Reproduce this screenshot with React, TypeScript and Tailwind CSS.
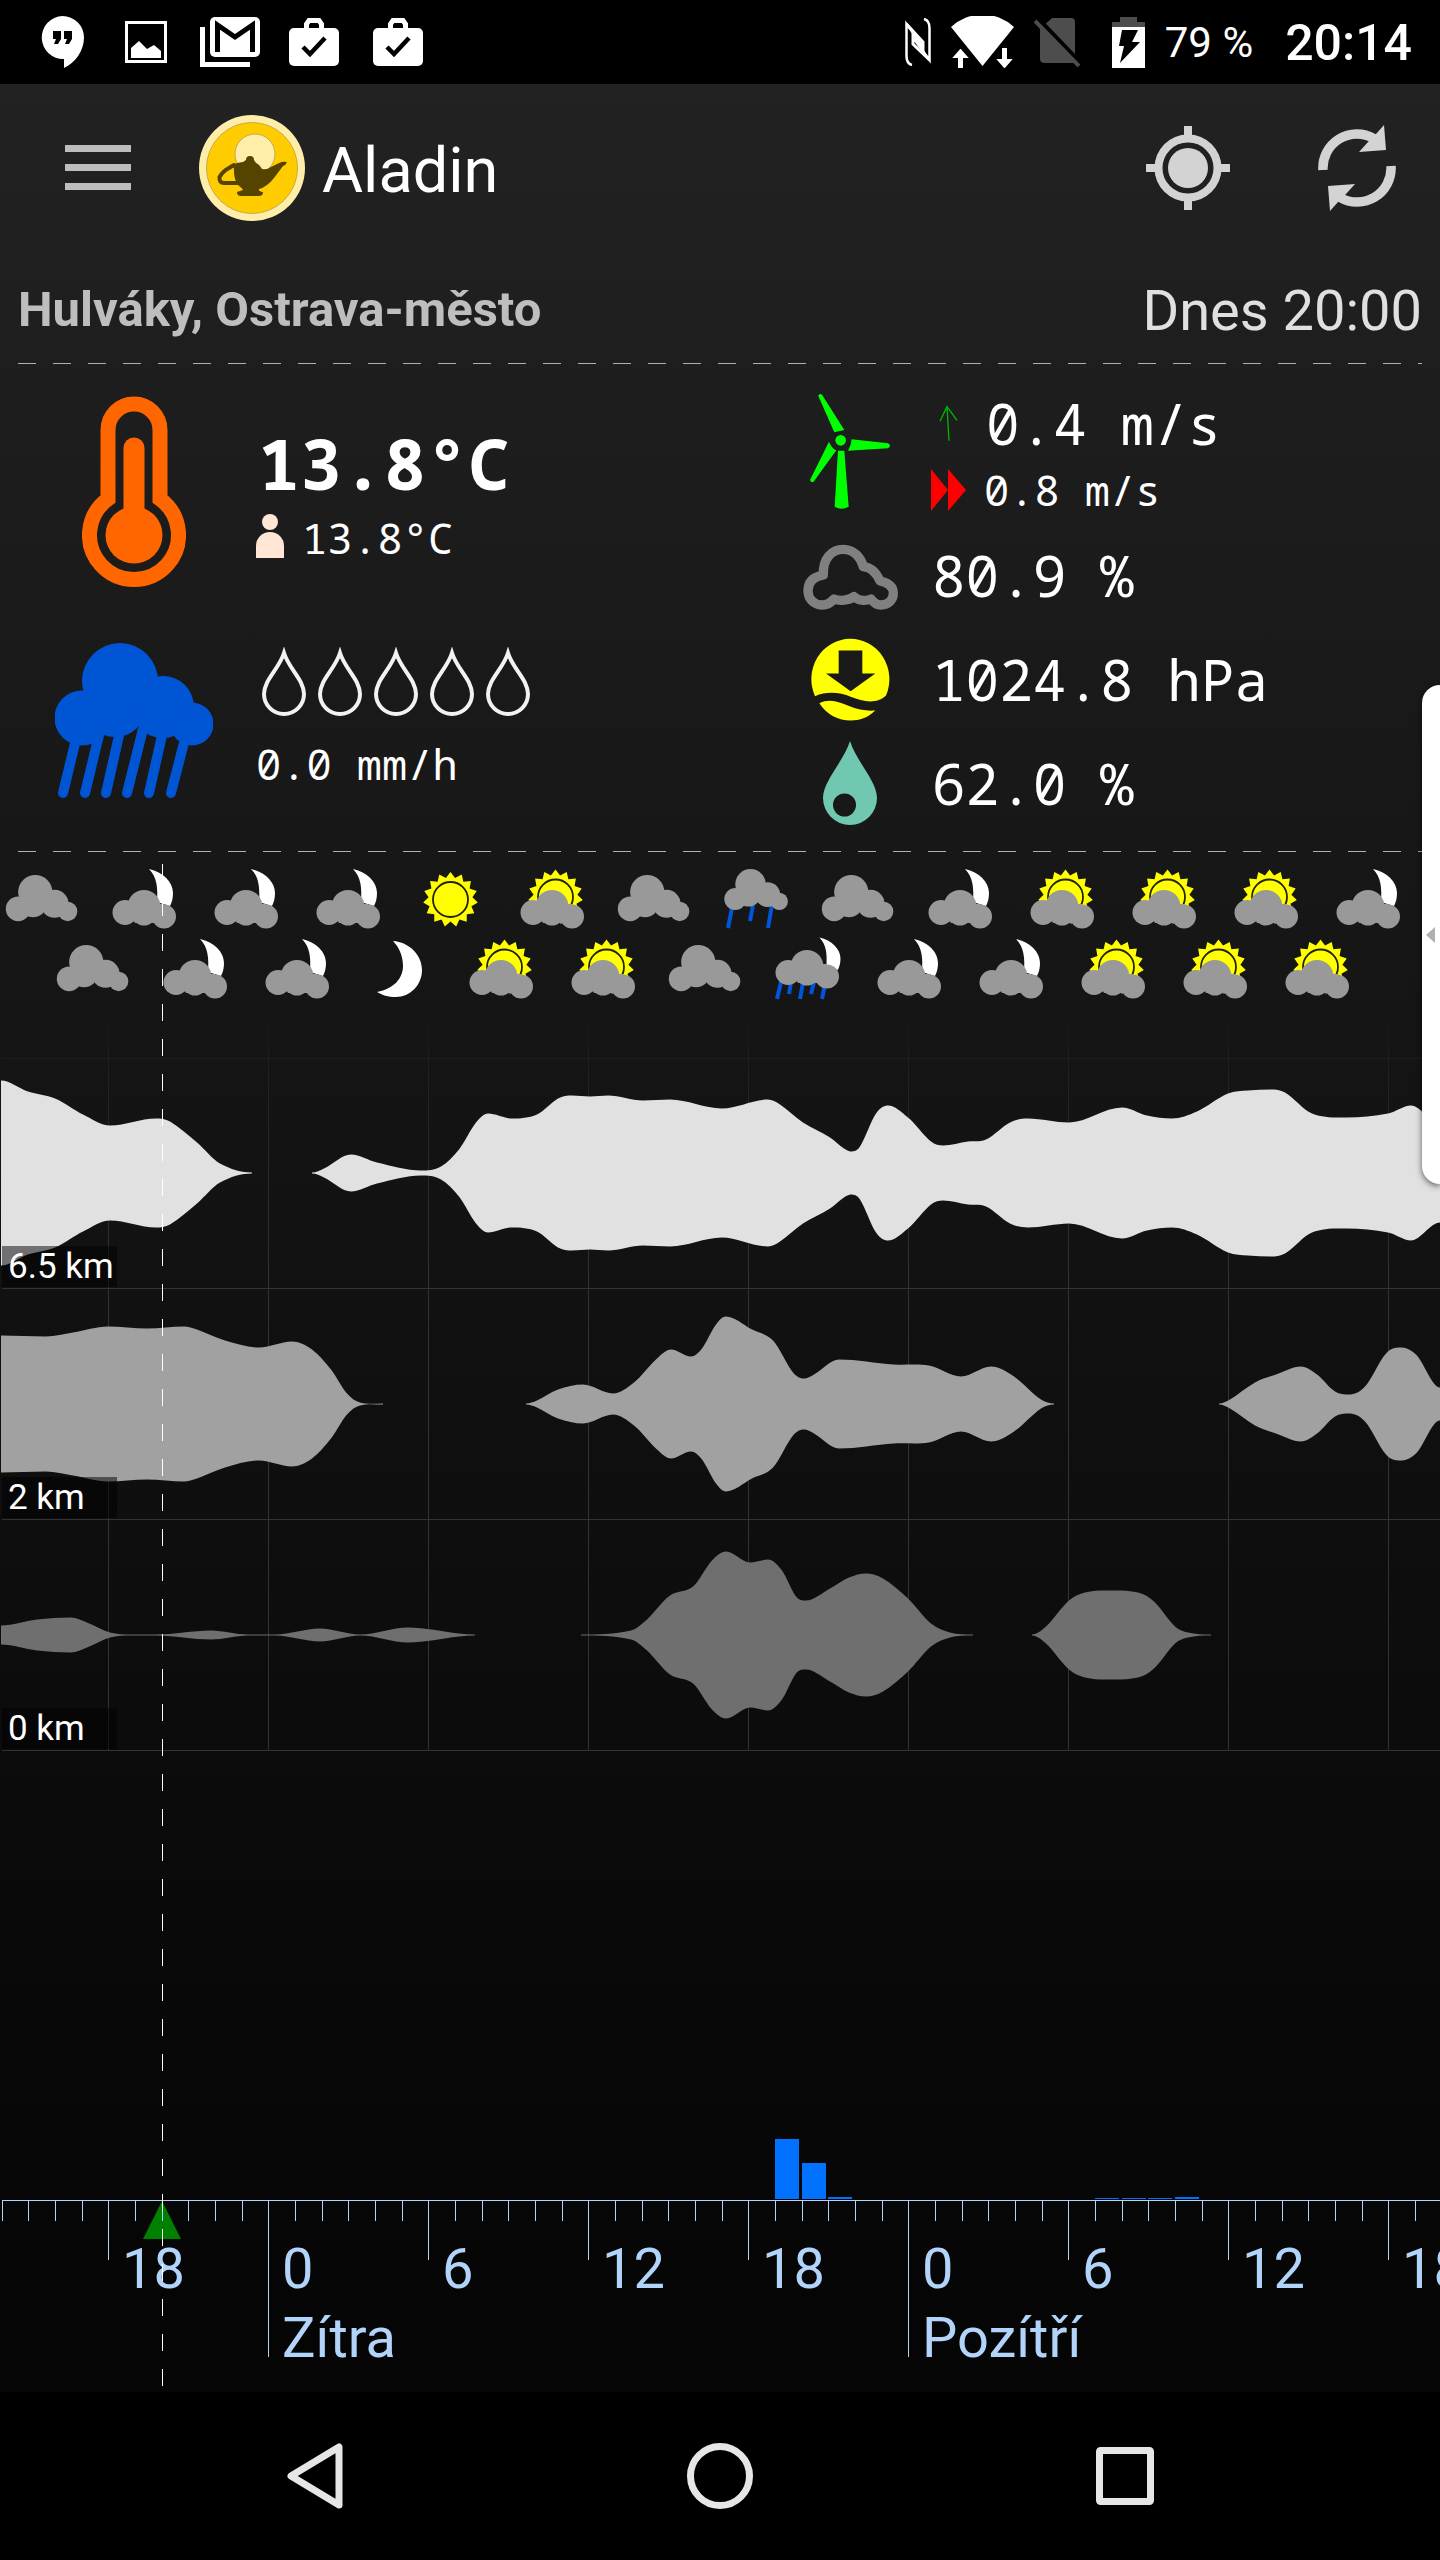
import type { ReactNode } from "react";

type Sky = "cloud" | "cloudMoon" | "cloudSun" | "sun" | "moon" | "rain" | "rainMoon";
type Point = [x: number, half: number];

const SKY_EVEN: Sky[] = [
  "cloud", "cloudMoon", "cloudMoon", "cloudMoon", "sun", "cloudSun", "cloud",
  "rain", "cloud", "cloudMoon", "cloudSun", "cloudSun", "cloudSun", "cloudMoon",
];
const SKY_ODD: Sky[] = [
  "cloud", "cloudMoon", "cloudMoon", "moon", "cloudSun", "cloudSun", "cloud",
  "rainMoon", "cloudMoon", "cloudMoon", "cloudSun", "cloudSun", "cloudSun",
];

// Cloud cover per altitude: half thickness of the band at each x
const LAYERS: { label: string; fill: string; top: number; runs: Point[][] }[] = [
  {
    label: "6.5 km",
    fill: "#e1e1e1",
    top: 54,
    runs: [
      [[1, 92], [28, 81], [55, 74], [83, 58], [110, 47], [156, 54], [170, 51], [197, 30], [220, 9], [252, 0]],
      [
        [312, 0], [324, 4], [351, 18], [377, 10], [421, 2], [441, 6], [459, 23], [476, 50], [488, 59], [512, 54],
        [537, 58], [558, 74], [572, 77], [590, 76], [608, 77], [643, 72], [670, 73], [722, 64], [768, 73], [780, 68],
        [803, 50], [830, 35], [844, 24], [851, 21], [860, 26], [876, 59], [888, 67], [908, 55], [931, 31], [943, 27],
        [968, 31], [986, 33], [1010, 50], [1028, 54], [1069, 50], [1122, 65], [1147, 57], [1172, 54], [1197, 61],
        [1228, 79], [1248, 82], [1271, 83], [1285, 80], [1312, 59], [1347, 55], [1388, 59], [1411, 67], [1440, 49],
      ],
    ],
  },
  {
    label: "2 km",
    fill: "#a1a1a1",
    top: 285,
    runs: [
      [
        [1, 68], [46, 67], [73, 71], [108, 77], [147, 75], [184, 77], [197, 74], [225, 63], [259, 56], [292, 62],
        [312, 54], [331, 34], [347, 10], [360, 1], [383, 0],
      ],
      [
        [526, 0], [537, 3], [558, 14], [583, 19], [613, 10], [634, 21], [657, 45], [671, 54], [691, 47], [702, 55],
        [716, 79], [726, 87], [752, 74], [773, 63], [793, 31], [804, 25], [814, 29], [839, 44], [894, 39], [929, 38],
        [961, 27], [991, 37], [1014, 27], [1041, 4], [1054, 0],
      ],
      [
        [1219, 0], [1230, 4], [1255, 21], [1276, 29], [1301, 37], [1317, 29], [1335, 12], [1349, 9], [1365, 17],
        [1386, 50], [1400, 56], [1416, 49], [1440, 16],
      ],
    ],
  },
  {
    label: "0 km",
    fill: "#6f6f6f",
    top: 516,
    runs: [
      [
        [1, 9], [37, 15], [71, 17], [87, 12], [110, 2], [131, 0], [156, 0], [211, 4], [248, 0], [275, 0], [320, 6],
        [360, 0], [408, 7], [459, 1], [475, 0],
      ],
      [
        [581, 0], [631, 4], [647, 15], [670, 39], [693, 48], [712, 74], [726, 83], [750, 72], [768, 75], [782, 64],
        [796, 38], [806, 34], [830, 46], [849, 57], [866, 61], [883, 56], [908, 36], [931, 11], [950, 2], [973, 0],
      ],
      [
        [1032, 0], [1046, 8], [1069, 34], [1085, 42], [1106, 44], [1138, 42], [1154, 33], [1175, 8], [1188, 2], [1211, 0],
      ],
    ],
  },
];

const RAIN_BARS = [
  { x: 775, h: 60 },
  { x: 802, h: 36 },
  { x: 828, h: 2 },
  { x: 1095, h: 1 },
  { x: 1122, h: 1 },
  { x: 1148, h: 1 },
  { x: 1175, h: 2 },
];

const HOURS = Array.from({ length: 54 }, (_, i) => ({ hour: (14 + i) % 24, x: Math.round(1.7 + (i * 80) / 3) }));
const DAYS = ["Zítra", "Pozítří"];

function curve(points: Point[]) {
  const slope = points.map((p, i) => {
    const a = points[i - 1];
    const b = points[i + 1];
    if (!a || !b || (p[1] - a[1]) * (b[1] - p[1]) <= 0) return 0;
    return (b[1] - a[1]) / (b[0] - a[0]);
  });
  return points
    .slice(1)
    .map((p, i) => {
      const q = points[i];
      const d = (p[0] - q[0]) / 3;
      return `C${q[0] + d} ${q[1] + slope[i] * d} ${p[0] - d} ${p[1] - slope[i + 1] * d} ${p[0]} ${p[1]}`;
    })
    .join("");
}

function bandPath(run: Point[], mid: number) {
  const up = run.map(([x, h]): Point => [x, mid - h - 0.5]);
  const down = run.map(([x, h]): Point => [x, mid + h + 0.5]).reverse();
  return `M${up[0].join(" ")}${curve(up)}L${down[0].join(" ")}${curve(down)}Z`;
}

// 15 points, tip radius 27.5
const SUN_RAYS = Array.from({ length: 30 }, (_, i) => {
  const r = i % 2 ? 22 : 27.5;
  const a = (i * 12 * Math.PI) / 180;
  return `${(r * Math.sin(a)).toFixed(1)},${(-r * Math.cos(a)).toFixed(1)}`;
}).join(" ");

function CloudShape() {
  return (
    <>
      <circle cx="65" cy="38" r="38" />
      <circle cx="108" cy="64" r="31" />
      <circle cx="27" cy="75" r="27.5" />
      <circle cx="137" cy="81" r="21.5" />
      <circle cx="60" cy="63" r="31" />
      <circle cx="104" cy="68" r="25" />
    </>
  );
}

function LowCloud() {
  return (
    <g fill="#999">
      <circle cx="42" cy="42.500" r="16.500" />
      <circle cx="23" cy="48.500" r="12.500" />
      <circle cx="62" cy="52.500" r="12" />
      <path d="M23 40H62V54L52 59H33Z" />
      <circle cx="42" cy="50" r="11.500" />
    </g>
  );
}

function Sun({ x, y }: { x: number; y: number }) {
  return (
    <g transform={`translate(${x} ${y})`}>
      <polygon points={SUN_RAYS} fill="#ff0" />
      <circle r="17.500" fill="#ff0" stroke="#222208" strokeWidth="1.800" />
    </g>
  );
}

const TIP_MOON = "M47 5C61 8 71 18 71 29C71 34 70 38 68 42L55 38C56 24 55 13 47 5Z";

function SkyIcon({ kind }: { kind: Sky }) {
  return (
    <svg viewBox="0 0 84 70" className="h-[70px] w-[84px] shrink-0">
      {kind === "cloud" && <g fill="#999" transform="translate(6 11) scale(.45)"><CloudShape /></g>}
      {kind === "sun" && <Sun x={42.5} y={35.5} />}
      {kind === "moon" && (
        <path fill="#fff" d="M36 7C52 8 65 21 65 36C65 51 53 63 39 63C31 63 25 61 20 58C37 55 46 44 46 32C46 22 42 13 36 7Z" />
      )}
      {kind === "cloudSun" && <><Sun x={45.5} y={33} /><LowCloud /></>}
      {kind === "cloudMoon" && <><path fill="#fff" d={TIP_MOON} /><LowCloud /></>}
      {kind === "rain" && (
        <>
          <path stroke="#0055dd" strokeWidth="4" d="M18 44L14 64M39 41L36 57M58 41L54 64" />
          <g fill="#999" transform="translate(10.500 5) scale(.4)"><CloudShape /></g>
        </>
      )}
      {kind === "rainMoon" && (
        <>
          <path fill="#fff" d={TIP_MOON} transform="translate(13 -1) scale(.88)" />
          <path stroke="#0055dd" strokeWidth="4" d="M16 48L12 65M26 48L24 60M38 48L35 65M49 48L46 60M60 50L57 65" />
          <g transform="translate(0 -10)"><LowCloud /></g>
        </>
      )}
    </svg>
  );
}

function StatusBar() {
  const bag = (
    <svg viewBox="0 0 50 48" className="h-12 w-[50px]">
      <path fill="none" stroke="#fff" strokeWidth="5" d="M17.500 12V6L20 2.500H30L32.500 6V12" />
      <rect y="10" width="50" height="38" rx="5" fill="#fff" />
      <path fill="none" stroke="#000" strokeWidth="4.500" d="M14 29L21 36L36 20" />
    </svg>
  );
  return (
    <div className="flex h-[84px] items-center justify-between bg-black pr-7 pl-5 text-white">
      <div className="flex *:flex *:w-[84px] *:items-center *:justify-center">
        <span>
          <svg viewBox="0 0 43 52" className="h-[52px] w-[43px]" fill="#fff">
            <path d="M21.500 0A21.500 21.500 0 0 1 43 21.500C43 35 34 47 23 52V43A21.500 21.500 0 0 1 21.500 0Z" />
            <path fill="#000" d="M12 15H20V23L17 28H13L15 23H12ZM23 15H31V23L28 28H24L26 23H23Z" />
          </svg>
        </span>
        <span>
          <svg viewBox="0 0 42 42" className="size-[42px]">
            <rect x="1.500" y="1.500" width="39" height="39" fill="none" stroke="#fff" strokeWidth="3" />
            <path fill="#fff" d="M6 37V27L14 20L22 28L29 24L36 30V37Z" />
          </svg>
        </span>
        <span>
          <svg viewBox="0 0 60 50" className="h-[50px] w-[60px]">
            <path fill="none" stroke="#fff" strokeWidth="5" d="M2.500 10V47.500H50" />
            <rect x="10" width="50" height="40" rx="5" fill="#fff" />
            <path fill="none" stroke="#000" strokeWidth="5" d="M17.500 35V8L35 20L52.500 8V35" />
          </svg>
        </span>
        <span>{bag}</span>
        <span>{bag}</span>
      </div>
      <div className="flex items-center">
        <svg viewBox="0 0 26 48" className="mr-5 h-12 w-[26px]" fill="none" stroke="#fff" strokeWidth="2.500">
          <path d="M7 47C3 46 1.500 43 1.500 38V6L17 27M19 1C23 2 24.500 5 24.500 10V42L9 21" />
          <path d="M1.500 6L18 24V30L8 18V26L24.500 42" strokeWidth="3" />
        </svg>
        <svg viewBox="0 0 63 52" className="mr-5 h-[52px] w-[63px]" fill="#fff">
          <path d="M0 11A46 46 0 0 1 63 11L31.500 50Z" />
          <path stroke="#000" strokeWidth="2" d="M9.500 31L-1 43H6V53H13V43H20ZM53.500 54L43 42H50V31H57V42H64Z" />
        </svg>
        <svg viewBox="0 0 46 50" className="mr-8 h-[50px] w-[46px]">
          <path fill="#4d4d4d" d="M18 1H37Q41 1 41 5V46H11Q6 46 6 42V12Z" />
          <path stroke="#000" strokeWidth="5" d="M4 2L47 47" />
          <path stroke="#4d4d4d" strokeWidth="4" d="M1 4L45 49" />
        </svg>
        <svg viewBox="0 0 33 51" className="mr-5 h-[51px] w-[33px]">
          <path fill="#4d4d4d" d="M8 0H25V5H33V12H0V5H8Z" />
          <path fill="#fff" d="M0 10H33V51H0Z" />
          <path fill="#000" d="M10 13H26L20 25H28L8 46L12 29H7Z" />
        </svg>
        <span className="mr-8 pt-0.5 text-[42px] leading-none">79 %</span>
        <span className="pt-0.5 text-[50px] leading-none font-medium">20:14</span>
      </div>
    </div>
  );
}

function AppBar() {
  return (
    <header className="flex h-[168px] items-center pr-11 pl-[65px]">
      <button aria-label="Menu" className="mr-[68px]">
        <svg viewBox="0 0 66 46" className="h-[46px] w-[66px]" fill="#bdbdbd">
          <path d="M0 0H66V7H0ZM0 19H66V26H0ZM0 38H66V45H0Z" />
        </svg>
      </button>
      <svg viewBox="0 0 106 106" className="mr-[17px] size-[106px]">
        <circle cx="53" cy="53" r="53" fill="#fea" />
        <circle cx="53" cy="53" r="45.500" fill="#fc0" stroke="#c8a94e" />
        <circle cx="56" cy="39" r="20" fill="#fea" stroke="#c8a94e" />
        <path
          fill="#540"
          d="M51 41Q55 41 55 45L57 48Q60 49 63 54Q68 55 72 52L80 48Q84 46 88 47Q87 50 84 51L75 63Q68 72 60 74Q59 76 64 77Q64 81 60 81H42Q38 81 38 77L44 75Q43 73 39 70Q35 64 35 57V52Q35 49 38 48L44 47L47 45Q47 41 51 41Z"
        />
        <path fill="none" stroke="#540" strokeWidth="4" strokeLinejoin="round" d="M40 57L35 50L30 53Q24 56 20.500 62Q20 68 25 68H40" />
      </svg>
      <h1 className="flex-1 pt-1 text-[63px] leading-none text-white">Aladin</h1>
      <button aria-label="Poloha" className="mr-[88px]">
        <svg viewBox="0 0 84 84" className="size-[84px]" fill="#d3d3d3">
          <circle cx="42" cy="42" r="20" />
          <circle cx="42" cy="42" r="29.500" fill="none" stroke="#d3d3d3" strokeWidth="8" />
          <path d="M38 0H46V12H38ZM38 72H46V84H38ZM0 38H12V46H0ZM72 38H84V46H72Z" />
        </svg>
      </button>
      <button aria-label="Obnovit">
        <svg viewBox="0 0 78 86" className="h-[86px] w-[78px]">
          {[0, 180].map((turn) => (
            <g key={turn} transform={`rotate(${turn} 39 43)`}>
              <path fill="none" stroke="#d3d3d3" strokeWidth="9.500" d="M5 45A34 34 0 0 1 56 13.500" />
              <path fill="#d3d3d3" d="M66 0L68 25L41 27L50 17L58 9Z" />
            </g>
          ))}
        </svg>
      </button>
    </header>
  );
}

function Divider() {
  return <div className="mx-[18px] h-px bg-[repeating-linear-gradient(90deg,#b0b0b0_0_18px,transparent_18px_35px)]" />;
}

function Reading({ icon, value }: { icon: ReactNode; value: string }) {
  return (
    <div className="flex h-[104px] items-center">
      <div className="w-[212px] shrink-0 pl-20">{icon}</div>
      <span className="text-[56px] leading-none">{value}</span>
    </div>
  );
}

function Conditions() {
  return (
    <section className="grid h-[487px] grid-cols-2 font-['Noto_Sans_Mono','DejaVu_Sans_Mono',monospace] whitespace-pre text-white">
      <div className="flex flex-col gap-[54px] pt-8">
        <div className="flex h-[193px]">
          <div className="flex w-[256px] shrink-0 justify-center pl-3">
            <svg viewBox="0 0 104 192" className="h-48 w-[104px]">
              <path fill="none" stroke="#f60" strokeWidth="15" d="M26 103V34A26 26 0 0 1 78 34V103A44.500 44.500 0 1 1 26 103Z" />
              <circle cx="52" cy="139" r="28.500" fill="#f60" />
              <path stroke="#f60" strokeWidth="21" strokeLinecap="round" d="M52 52V130" />
            </svg>
          </div>
          <div className="pt-8">
            <div className="pl-0.5 text-[70px] leading-[70px] font-bold">13.8°C</div>
            <div className="mt-3 flex gap-[18px]">
              <svg viewBox="0 0 28 44" className="mt-1 h-11 w-7" fill="#ffe6d5">
                <circle cx="14" cy="8" r="8" />
                <path d="M0 44V32A14 14 0 0 1 28 32V44Z" />
              </svg>
              <span className="text-[42px] leading-[56px]">13.8°C</span>
            </div>
          </div>
        </div>
        <div className="flex">
          <div className="flex w-[256px] shrink-0 justify-center pl-3">
            <svg viewBox="0 0 158 156" className="h-[156px] w-[158px]" fill="#0055d4">
              <CloudShape />
              <path
                fill="none"
                stroke="#0055d4"
                strokeWidth="10"
                strokeLinecap="round"
                d="M8 150L22 92M30 150L44 92M51 150L65 88M72 150L88 86M94 150L108 88M116 150L131 92"
              />
            </svg>
          </div>
          <div className="flex flex-col gap-[26px] pt-1">
            <div className="flex gap-3 pl-[6px]">
              {[1, 2, 3, 4, 5].map((n) => (
                <svg key={n} viewBox="0 0 44 69" className="h-[69px] w-11">
                  <path fill="none" stroke="#f2f2f2" strokeWidth="4" d="M22 6C17 22 2 33 2 47A20 20 0 0 0 42 47C42 33 27 22 22 6Z" />
                </svg>
              ))}
            </div>
            <div className="text-[42px] leading-[44px]">0.0 mm/h</div>
          </div>
        </div>
      </div>

      <div>
        <div className="flex h-[159px] pt-[26px]">
          <div className="w-[210px] shrink-0 pl-[83px]">
            <svg viewBox="70 30 300 360" className="h-[120px] w-[100px]" fill="#0f0">
              <path d="M116 48Q118 38 127 44L194 150L164 157Z" />
              <path d="M216 178L325 190Q337 198 325 205L205 212Q214 198 216 178Z" />
              <path d="M148 185Q156 205 170 211L104 302Q97 312 91 300Z" />
              <path d="M175 212H194L207 380Q186 392 165 380Z" />
              <circle cx="183" cy="181" r="16" />
            </svg>
          </div>
          <div>
            <div className="flex h-[66px] items-center">
              <svg viewBox="450 70 108 108" className="mr-5 size-9" fill="none" stroke="#00b400" strokeWidth="4">
                <path d="M507 177L501 75M480 119L501 75L531 116" />
              </svg>
              <span className="text-[56px] leading-none">0.4 m/s</span>
            </div>
            <div className="mt-1 flex h-[60px] items-center">
              <svg viewBox="0 0 36 42" className="mr-[18px] h-[42px] w-9" fill="#f00">
                <path d="M1 0L18 21L1 42ZM18 0L36 21L18 42Z" />
              </svg>
              <span className="text-[42px] leading-none">0.8 m/s</span>
            </div>
          </div>
        </div>
        <Reading
          value="80.9 %"
          icon={
            <svg viewBox="60 475 300 210" className="h-[70px] w-[100px]">
              <path
                fill="none"
                stroke="#808080"
                strokeWidth="28"
                strokeLinejoin="round"
                d="M130 580C128 530 155 503 190 503C222 503 243 528 250 555C275 557 290 575 300 598C325 603 340 615 340 635C340 655 325 670 303 670C290 670 280 662 273 652C255 659 235 657 222 645C205 657 180 659 162 652C150 667 135 670 126 670C100 670 84 650 84 627C84 600 100 585 130 580Z"
              />
            </svg>
          }
        />
        <Reading
          value="1024.8 hPa"
          icon={
            <svg viewBox="60 765 300 260" className="h-[87px] w-[100px]" fill="#ff0">
              <path
                fillRule="evenodd"
                d="M105 945A117 121 0 1 1 318 943C290 970 250 962 212 947C180 933 140 930 105 945ZM176 808V877H138L212 930L286 877H247V808Z"
              />
              <path d="M118 966C150 950 180 963 205 974C235 986 260 990 286 988C262 1010 240 1018 212 1018C175 1018 140 1000 118 966Z" />
            </svg>
          }
        />
        <Reading
          value="62.0 %"
          icon={
            <svg viewBox="0 0 100 84" className="h-[84px] w-[100px]">
              <path
                fill="#71c8b0"
                fillRule="evenodd"
                d="M50 0C56 20 77 40 77 57A27 27 0 0 1 23 57C23 40 44 20 50 0ZM33 64A11.500 11.500 0 1 0 56 64A11.500 11.500 0 1 0 33 64Z"
              />
            </svg>
          }
        />
      </div>
    </section>
  );
}

function ForecastChart() {
  const midnights = HOURS.filter((h) => h.hour === 0);
  return (
    <svg viewBox="0 0 1440 1388" className="block h-auto w-full overflow-visible">
      <defs>
        <linearGradient id="grid" gradientUnits="userSpaceOnUse" x1="0" y1="6" x2="0" y2="284">
          <stop offset="0" stopColor="#333" stopOpacity="0" />
          <stop offset="0.300" stopColor="#333" stopOpacity="0.500" />
          <stop offset="1" stopColor="#333" />
        </linearGradient>
      </defs>

      <g shapeRendering="crispEdges">
        {HOURS.filter((h) => h.hour % 6 === 0).map((h) => (
          <rect key={h.x} x={h.x} y="6" width="1" height="740" fill="url(#grid)" />
        ))}
        <rect x="2" y="54" width="1438" height="1" fill="#1e1e1e" />
        {LAYERS.map((l) => (
          <rect key={l.label} x="2" y={l.top + 230} width="1438" height="1" fill="#333" />
        ))}
      </g>

      {LAYERS.map((l) => (
        <g key={l.label}>
          {l.runs.map((run, i) => (
            <path key={i} d={bandPath(run, l.top + 115)} fill={l.fill} />
          ))}
          <rect x="2" y={l.top + 188} width="115" height="41" fill="#000" fillOpacity="0.500" />
          <text x="8" y={l.top + 220} fontSize="35" fill="#fff">{l.label}</text>
        </g>
      ))}

      {RAIN_BARS.map((b) => (
        <rect key={b.x} x={b.x} y={1195 - b.h} width="24" height={b.h} fill="#0072ff" />
      ))}

      <path d="M162 1197L181 1235H143Z" fill="#008000" />
      <g fill="#b3d4fa" shapeRendering="crispEdges">
        <rect x="2" y="1196" width="1438" height="1" />
        {HOURS.map((h) => (
          <rect key={h.x} x={h.x} y="1196" width="1" height={h.hour === 0 ? 157 : h.hour % 6 === 0 ? 60 : 21} />
        ))}
      </g>
      <g fill="#b3d4fa" fontSize="56">
        {HOURS.filter((h) => h.hour % 6 === 0).map((h) => (
          <text key={h.x} x={h.x + 14} y="1284">{h.hour}</text>
        ))}
        {midnights.map((h, i) => (
          <text key={h.x} x={h.x + 14} y="1353">{DAYS[i]}</text>
        ))}
      </g>

      {/* current hour */}
      <path d="M162.500 -140V1382" stroke="#fff" strokeDasharray="17 18" shapeRendering="crispEdges" />
    </svg>
  );
}

function NavBar() {
  return (
    <nav className="flex h-[168px] bg-black px-28 *:flex *:flex-1 *:items-center *:justify-center">
      <button aria-label="Zpět">
        <svg viewBox="0 0 56 66" className="h-[66px] w-14" fill="none" stroke="#e6e6e6" strokeWidth="7" strokeLinejoin="round">
          <path d="M52 4V62L4 33Z" />
        </svg>
      </button>
      <button aria-label="Domů">
        <svg viewBox="0 0 66 66" className="size-[66px]" fill="none" stroke="#e6e6e6" strokeWidth="7">
          <circle cx="33" cy="33" r="29.500" />
        </svg>
      </button>
      <button aria-label="Přehled">
        <svg viewBox="0 0 58 60" className="h-[60px] w-[58px]" fill="none" stroke="#e6e6e6" strokeWidth="7">
          <rect x="3.500" y="4.500" width="51" height="51" rx="1" />
        </svg>
      </button>
    </nav>
  );
}

export default function App() {
  return (
    <div className="relative flex min-h-screen flex-col overflow-hidden bg-black font-[Roboto,sans-serif]">
      <StatusBar />
      <main className="flex-1 bg-linear-to-b from-[#222] via-[#0f0f0f] via-60% to-[#050505]">
        <AppBar />
        <div className="flex h-[111px] items-center justify-between px-[18px] pt-1">
          <h2 className="text-[49px] leading-none font-bold text-[#bebebe]">Hulváky, Ostrava-město</h2>
          <span className="pt-0.5 text-[56px] leading-none text-[#e0e0e0]">Dnes 20:00</span>
        </div>
        <Divider />
        <Conditions />
        <Divider />
        <section>
          <div className="flex gap-[18px] overflow-hidden pt-3">
            {SKY_EVEN.map((kind, i) => <SkyIcon key={i} kind={kind} />)}
          </div>
          <div className="flex gap-[18px] overflow-hidden pl-[51px]">
            {SKY_ODD.map((kind, i) => <SkyIcon key={i} kind={kind} />)}
          </div>
          <ForecastChart />
        </section>
      </main>
      <NavBar />

      {/* edge panel handle, floats over the page */}
      <button
        aria-label="Panel"
        className="absolute top-[685px] right-0 h-[499px] w-[18px] rounded-l-[20px] bg-white shadow-[0_2px_6px_rgba(0,0,0,0.6)]"
      >
        <svg viewBox="0 0 9 16" className="ml-1 h-4 w-[9px]" fill="#b0b0b0">
          <path d="M9 0V16L0 8Z" />
        </svg>
      </button>
    </div>
  );
}
